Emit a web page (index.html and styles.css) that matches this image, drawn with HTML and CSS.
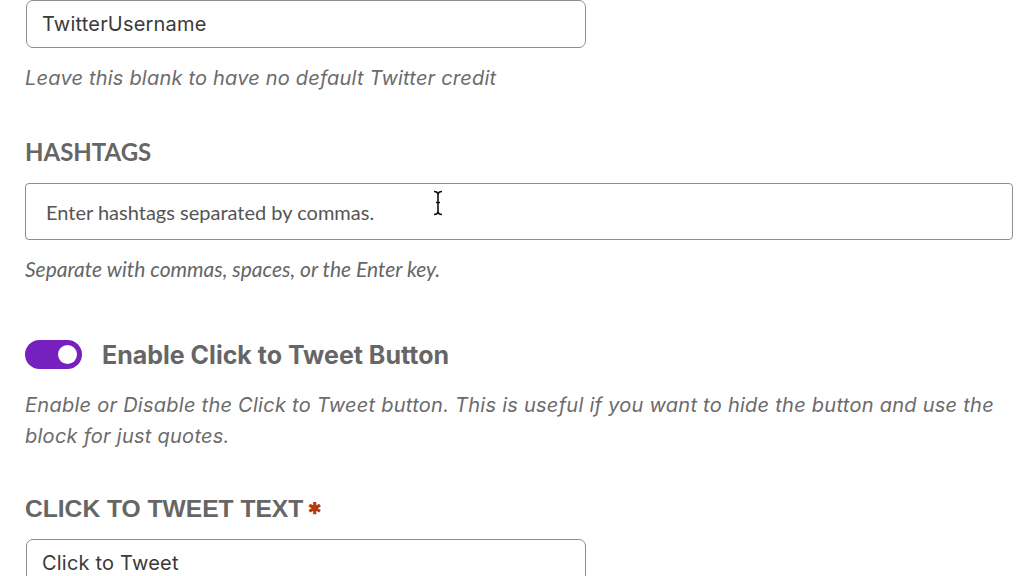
FILE: index.html
```html
<!DOCTYPE html>
<html>
<head>
<meta charset="utf-8">
<link rel="stylesheet" href="styles.css">
</head>
<body>
<div class="form">
  <div class="field field-first">
    <div class="input input-round"><span class="value">TwitterUsername</span></div>
    <p class="help">Leave this blank to have no default Twitter credit</p>
  </div>

  <div class="field field-hashtags">
    <div class="label-alt">HASHTAGS</div>
    <div class="input input-tags">
      <span class="placeholder">Enter hashtags separated by commas.</span>
      <svg class="ibeam" width="12" height="26" viewBox="0 0 12 26">
        <path d="M2 1.5 Q6 1.5 6 5 Q6 1.5 10 1.5 M6 5 V21 M4 12.5 H8 M2 24.5 Q6 24.5 6 21 Q6 24.5 10 24.5" fill="none" stroke="#111" stroke-width="1.6"/>
      </svg>
    </div>
    <p class="help-alt">Separate with commas, spaces, or the Enter key.</p>
  </div>

  <div class="field field-toggle">
    <div class="toggle-row">
      <span class="toggle"><span class="knob"></span></span>
      <span class="toggle-label">Enable Click to Tweet Button</span>
    </div>
    <p class="help help-wide">Enable or Disable the Click to Tweet button. This is useful if you want to hide the button and use the block for just quotes.</p>
  </div>

  <div class="field field-text">
    <div class="label">CLICK TO TWEET TEXT<span class="req">&#x2731;</span></div>
    <div class="input input-round"><span class="value">Click to Tweet</span></div>
  </div>
</div>
</body>
</html>
```

FILE: styles.css
```css
html, body {
  margin: 0;
  padding: 0;
  background: #ffffff;
}
body {
  width: 1024px;
  height: 576px;
  overflow: hidden;
  font-family: "Inter", "Liberation Sans", sans-serif;
}
.form {
  padding-left: 25px;
  display: flex;
  flex-direction: column;
}
.input {
  box-sizing: border-box;
  border: 1px solid #8e8e8e;
  display: flex;
  align-items: center;
  background: #fff;
}
.input-round {
  width: 560px;
  height: 48px;
  margin-left: 1px;
  border-radius: 7px;
  padding-left: 15px;
}
.value {
  font-size: 20px;
  color: #3a3a3a;
  letter-spacing: 0.2px;
}
.help {
  margin: 15px 0 0 0;
  font-size: 20px;
  letter-spacing: 0.2px;
  font-style: italic;
  color: #6b6b6b;
  line-height: 31px;
}
.field-hashtags {
  margin-top: 43px;
}
.label-alt {
  font-family: "Lato", "Open Sans", sans-serif;
  font-weight: 700;
  font-size: 24px;
  color: #666;
  line-height: 30px;
}
.input-tags {
  width: 988px;
  height: 57px;
  margin-top: 16px;
  border-radius: 4px;
  padding-left: 20px;
  position: relative;
}
.placeholder {
  font-family: "Lato", "Open Sans", sans-serif;
  font-size: 20px;
  color: #555;
}
.ibeam {
  position: absolute;
  left: 406px;
  top: 6px;
}
.help-alt {
  margin: 16px 0 0 0;
  font-family: "Lato", "Open Sans", sans-serif;
  font-style: italic;
  font-size: 21px;
  color: #666;
  line-height: 26px;
}
.field-toggle {
  margin-top: 58px;
}
.toggle-row {
  display: flex;
  align-items: center;
  gap: 20px;
  height: 29px;
}
.toggle {
  width: 57px;
  height: 29px;
  border-radius: 15px;
  background: #7620c0;
  position: relative;
  flex: none;
}
.knob {
  position: absolute;
  right: 5px;
  top: 5px;
  width: 19px;
  height: 19px;
  border-radius: 50%;
  background: #fff;
}
.toggle-label {
  font-weight: 700;
  font-size: 25px;
  line-height: 30px;
  color: #666;
}
.help-wide {
  margin-top: 21px;
  max-width: 990px;
  letter-spacing: 0.26px;
}
.field-text {
  margin-top: 42px;
}
.label {
  font-family: "Liberation Sans", Arial, sans-serif;
  font-weight: 700;
  font-size: 24.6px;
  color: #666;
  line-height: 30px;
}
.req {
  color: #b7370f;
  font-size: 16px;
  margin-left: 5px;
  vertical-align: 3px;
}
.field-text .input-round {
  margin-top: 15px;
}
```
